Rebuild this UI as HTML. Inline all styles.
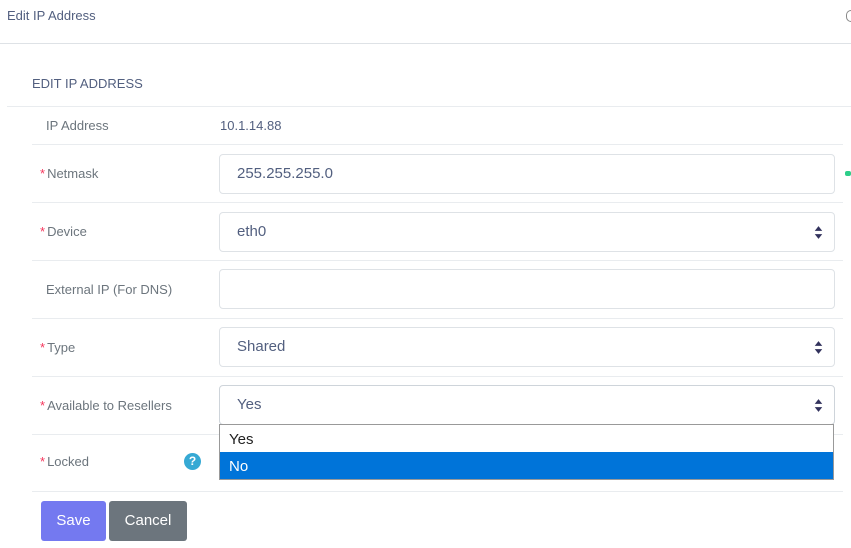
<!DOCTYPE html>
<html><head><meta charset="utf-8"><style>
*{box-sizing:border-box;margin:0;padding:0}
body{width:851px;height:548px;background:#fff;font-family:"Liberation Sans",sans-serif;color:#6c757d;position:relative;overflow:hidden}
.a{position:absolute}
.line{position:absolute;height:1px;background:#e9ecef}
.lbl{position:absolute;font-size:13px;color:#6c757d}
.star{color:#f5365c;font-size:13px;margin-right:2px}
.inp{position:absolute;left:219px;width:616px;height:40px;border:1px solid #dee2e6;border-radius:4px;background:#fff;font-size:15px;color:#525f7f;padding:10px 0 0 17px}
.arr{position:absolute;right:11px;top:12px;width:9px;height:15px}
</style></head><body>
<div class="a" style="left:7px;top:8px;font-size:13px;color:#525f7f">Edit IP Address</div>
<div class="a" style="left:846px;top:10px;width:5px;height:12px;border:1px solid #888;border-right:none;border-radius:6px 0 0 6px"></div>
<div class="line" style="left:0;top:43px;width:851px;background:#dee2e6"></div>
<div class="a" style="left:32px;top:76px;font-size:13px;color:#525f7f">EDIT IP ADDRESS</div>
<div class="line" style="left:7px;top:106px;width:844px"></div>

<div class="lbl" style="left:46px;top:118px">IP Address</div>
<div class="a" style="left:220px;top:118px;font-size:13px;color:#525f7f">10.1.14.88</div>
<div class="line" style="left:32px;top:144px;width:811px"></div>

<div class="lbl" style="left:40px;top:166px"><span class="star">*</span>Netmask</div>
<div class="inp" style="top:154px">255.255.255.0</div>
<div class="a" style="left:845px;top:171px;width:6px;height:5px;background:#2dce89;border-radius:2px"></div>
<div class="line" style="left:32px;top:202px;width:811px"></div>

<div class="lbl" style="left:40px;top:224px"><span class="star">*</span>Device</div>
<div class="inp" style="top:212px">eth0<svg class="arr" viewBox="0 0 8 14"><path d="M4 1L7.5 5.5H.5zM4 13L.5 8.5H7.5z" fill="#32325d"/></svg></div>
<div class="line" style="left:32px;top:260px;width:811px"></div>

<div class="lbl" style="left:46px;top:282px">External IP (For DNS)</div>
<div class="inp" style="top:269px"></div>
<div class="line" style="left:32px;top:318px;width:811px"></div>

<div class="lbl" style="left:40px;top:340px"><span class="star">*</span>Type</div>
<div class="inp" style="top:327px">Shared<svg class="arr" viewBox="0 0 8 14"><path d="M4 1L7.5 5.5H.5zM4 13L.5 8.5H7.5z" fill="#32325d"/></svg></div>
<div class="line" style="left:32px;top:376px;width:811px"></div>

<div class="lbl" style="left:40px;top:398px"><span class="star">*</span>Available to Resellers</div>
<div class="inp" style="top:385px;border-color:#ced4da">Yes<svg class="arr" viewBox="0 0 8 14"><path d="M4 1L7.5 5.5H.5zM4 13L.5 8.5H7.5z" fill="#32325d"/></svg></div>
<div class="line" style="left:32px;top:434px;width:811px"></div>

<div class="lbl" style="left:40px;top:454px"><span class="star">*</span>Locked</div>
<div class="a" style="left:184px;top:453px;width:17px;height:17px;border-radius:50%;background:#36a9d4;color:#fff;font-size:12px;font-weight:bold;text-align:center;line-height:17px">?</div>
<div class="line" style="left:32px;top:491px;width:811px"></div>

<div class="a" style="left:219px;top:424px;width:615px;height:56px;border:1px solid #999;background:#fff">
<div style="height:27px;font-size:15px;color:#222;padding:6px 0 0 9px">Yes</div>
<div style="height:27px;font-size:15px;color:#fff;background:#0074d9;padding:6px 0 0 9px">No</div>
</div>

<div class="a" style="left:41px;top:501px;width:65px;height:40px;background:#7479f0;border-radius:3px;color:#fff;font-size:15px;text-align:center;line-height:40px">Save</div>
<div class="a" style="left:109px;top:501px;width:78px;height:40px;background:#6c757d;border-radius:3px;color:#fff;font-size:15px;text-align:center;line-height:40px">Cancel</div>
</body></html>
